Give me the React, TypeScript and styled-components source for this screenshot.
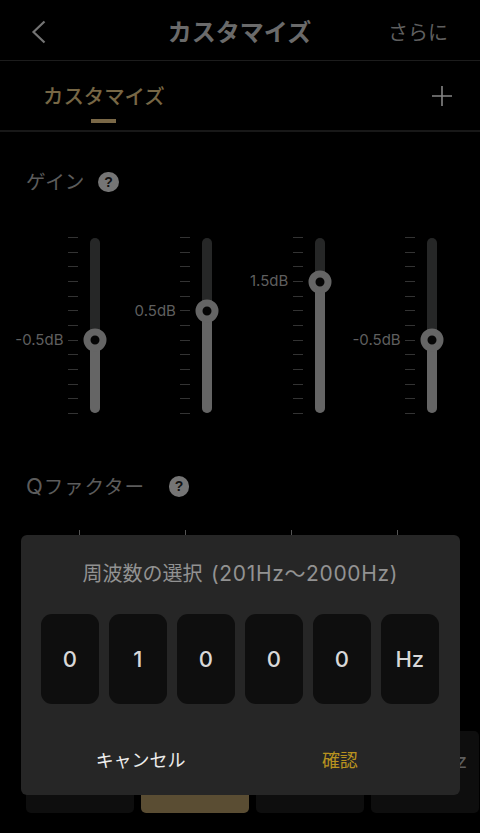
import React from "react";
import styled, { createGlobalStyle } from "styled-components";

const Global = createGlobalStyle`
  html, body { margin: 0; padding: 0; background: #000; }
  body { font-family: Inter, "Noto Sans CJK JP", sans-serif; }
  * { box-sizing: border-box; }
`;

const Page = styled.div`
  position: relative;
  width: 480px;
  height: 833px;
  overflow: hidden;
  background: #000;
  display: flex;
  flex-direction: column;
`;

const Header = styled.header`
  height: 61px;
  flex: none;
  border-bottom: 1px solid #1c1c1c;
  display: grid;
  grid-template-columns: 1fr auto 1fr;
  align-items: center;
  padding: 2px 32px 0 31px;
`;

const BackButton = styled.svg`
  width: 16px;
  height: 24px;
  margin-top: 1px;
  display: block;
`;

const Title = styled.h1`
  margin: 0;
  font-size: 24px;
  line-height: 32px;
  font-weight: 700;
  color: #6a6a6a;
  font-family: "Noto Sans CJK JP", sans-serif;
`;

const More = styled.span`
  justify-self: end;
  margin-top: 1px;
  font-size: 20px;
  line-height: 28px;
  color: #5f5f5f;
  font-family: "Noto Sans CJK JP", sans-serif;
`;

const TabBar = styled.nav`
  height: 71px;
  flex: none;
  border-bottom: 2px solid #181818;
  display: flex;
  align-items: flex-start;
  justify-content: space-between;
  padding: 0 28px 0 43px;
`;

const Tab = styled.div`
  position: relative;
  height: 69px;
  padding-top: 20px;
  font-size: 20.4px;
  line-height: 28px;
  font-weight: 500;
  color: #776745;
  font-family: "Noto Sans CJK JP", sans-serif;

  &::after {
    content: "";
    position: absolute;
    left: 48px;
    bottom: 7px;
    width: 25px;
    height: 4px;
    background: #7a6847;
  }
`;

const PlusIcon = styled.svg`
  width: 20px;
  height: 20px;
  margin-top: 25px;
  display: block;
`;

const SectionHead = styled.div<{ $gap: number; $top: number }>`
  display: flex;
  align-items: center;
  gap: ${(p) => p.$gap}px;
  margin-top: ${(p) => p.$top}px;
  padding-left: 26px;
  height: 28px;
  flex: none;
`;

const SectionLabel = styled.span<{ $spacing?: number }>`
  font-size: 19.6px;
  line-height: 28px;
  letter-spacing: ${(p) => p.$spacing ?? 0}px;
  color: #5c5c5c;
`;

const QLetter = styled.span`
  font-size: 22px;
`;

const HelpBadge = styled.span`
  width: 20.5px;
  height: 20.5px;
  border-radius: 50%;
  background: #757575;
  color: #111;
  font-size: 14px;
  line-height: 20.5px;
  font-weight: 800;
  text-align: center;
  font-family: "Liberation Sans", sans-serif;
`;

const SliderGrid = styled.div`
  margin-top: 41px;
  padding: 0 43px 0 12px;
  display: grid;
  grid-template-columns: repeat(4, 88px);
  column-gap: 24.4px;
  flex: none;
`;

const Slider = styled.div`
  display: flex;
  justify-content: flex-end;
  gap: 12px;
  height: 177px;
`;

const TickColumn = styled.div`
  position: relative;
  width: 10px;
  display: flex;
  flex-direction: column;
  justify-content: space-between;
`;

const Tick = styled.i`
  display: block;
  height: 1px;
  background: #333;
`;

const ValueLabel = styled.span`
  position: absolute;
  right: 14.5px;
  transform: translateY(-50%);
  font-size: 15px;
  line-height: 18px;
  color: #5f5f5f;
  white-space: nowrap;
`;

const Track = styled.div`
  position: relative;
  width: 10px;
  margin-top: 1px;
  height: 175px;
  border-radius: 5px;
  background: #262727;
`;

const Fill = styled.div`
  position: absolute;
  left: 0;
  right: 0;
  bottom: 0;
  border-radius: 0 0 5px 5px;
  background: #656565;
`;

const Thumb = styled.div`
  position: absolute;
  left: 50%;
  width: 23px;
  height: 23px;
  border-radius: 50%;
  border: 7.5px solid #656565;
  background: #050505;
  transform: translate(-50%, -50%);
`;

const QTicks = styled.div`
  margin-top: 29.5px;
  padding-left: 79px;
  display: flex;
  gap: 105px;
  flex: none;
`;

const QTick = styled.i`
  display: block;
  width: 1px;
  height: 6px;
  background: #555;
`;

const BottomRow = styled.div`
  position: absolute;
  left: 26px;
  right: 1px;
  bottom: 20px;
  height: 82px;
  display: grid;
  grid-template-columns: repeat(4, 108.4px);
  column-gap: 6.5px;
`;

const BandCard = styled.div<{ $active?: boolean }>`
  border-radius: 5px;
  background: ${(p) => (p.$active ? "#5a4d33" : "#0e0e0e")};
  color: #5d5d5d;
  font-size: 20px;
  line-height: 60px;
  text-align: center;
  white-space: nowrap;
`;

const Dialog = styled.div`
  position: absolute;
  left: 21px;
  top: 535px;
  width: 438.5px;
  height: 259.5px;
  border-radius: 6px;
  background: #262626;
  padding: 25px 20px 0;
  display: flex;
  flex-direction: column;
`;

const DialogTitle = styled.h2`
  margin: 0;
  text-align: center;
  font-size: 20px;
  line-height: 28px;
  font-weight: 400;
  color: #929292;
  white-space: nowrap;
`;

const TitleNumbers = styled.span`
  font-size: 21px;
  letter-spacing: 0.65px;
  margin-left: 3px;
`;

const DigitRow = styled.div`
  margin-top: 26px;
  display: grid;
  grid-template-columns: repeat(6, 57.6px);
  column-gap: 10.4px;
`;

const DigitCell = styled.div`
  height: 90px;
  border-radius: 11px;
  background: #0e0e0e;
  color: #d8d8d8;
  font-size: 22px;
  font-weight: 500;
  display: flex;
  align-items: center;
  justify-content: center;
`;

const DialogActions = styled.div`
  margin-top: 42px;
  display: grid;
  grid-template-columns: 1fr 1fr;
`;

const ActionButton = styled.button<{ $primary?: boolean }>`
  border: 0;
  padding: 0;
  background: none;
  font-family: "Noto Sans CJK JP", sans-serif;
  font-size: 18px;
  line-height: 26px;
  color: ${(p) => (p.$primary ? "#b8921f" : "#ececec")};
`;

const sliders = [
  { label: "-0.5dB", pos: 58.3 },
  { label: "0.5dB", pos: 41.6 },
  { label: "1.5dB", pos: 25 },
  { label: "-0.5dB", pos: 58.3 },
];

export default function App() {
  return (
    <Page>
      <Global />
      <Header>
        <BackButton viewBox="0 0 16 24" fill="none">
          <path d="M13.5 1.5 2.5 12l11 10.5" stroke="#747474" strokeWidth="2.2" />
        </BackButton>
        <Title>カスタマイズ</Title>
        <More>さらに</More>
      </Header>
      <TabBar>
        <Tab>カスタマイズ</Tab>
        <PlusIcon viewBox="0 0 20 20" fill="none">
          <path d="M10 0v20M0 10h20" stroke="#858585" strokeWidth="1.6" />
        </PlusIcon>
      </TabBar>
      <SectionHead $gap={14} $top={36}>
        <SectionLabel>ゲイン</SectionLabel>
        <HelpBadge>?</HelpBadge>
      </SectionHead>
      <SliderGrid>
        {sliders.map((s, i) => (
          <Slider key={i}>
            <TickColumn>
              {Array.from({ length: 13 }, (_, t) => (
                <Tick key={t} />
              ))}
              <ValueLabel style={{ top: `${s.pos}%` }}>{s.label}</ValueLabel>
            </TickColumn>
            <Track>
              <Fill style={{ height: `${100 - s.pos}%` }} />
              <Thumb style={{ top: `${s.pos}%` }} />
            </Track>
          </Slider>
        ))}
      </SliderGrid>
      <SectionHead $gap={24} $top={58.5}>
        <SectionLabel $spacing={0.8}>
          <QLetter>Q</QLetter>ファクター
        </SectionLabel>
        <HelpBadge>?</HelpBadge>
      </SectionHead>
      <QTicks>
        <QTick />
        <QTick />
        <QTick />
        <QTick />
      </QTicks>
      <BottomRow>
        <BandCard />
        <BandCard $active />
        <BandCard />
        <BandCard>10000Hz</BandCard>
      </BottomRow>
      <Dialog>
        <DialogTitle>
          周波数の選択 <TitleNumbers>(201Hz～2000Hz)</TitleNumbers>
        </DialogTitle>
        <DigitRow>
          {["0", "1", "0", "0", "0", "Hz"].map((d, i) => (
            <DigitCell key={i}>{d}</DigitCell>
          ))}
        </DigitRow>
        <DialogActions>
          <ActionButton>キャンセル</ActionButton>
          <ActionButton $primary>確認</ActionButton>
        </DialogActions>
      </Dialog>
    </Page>
  );
}
